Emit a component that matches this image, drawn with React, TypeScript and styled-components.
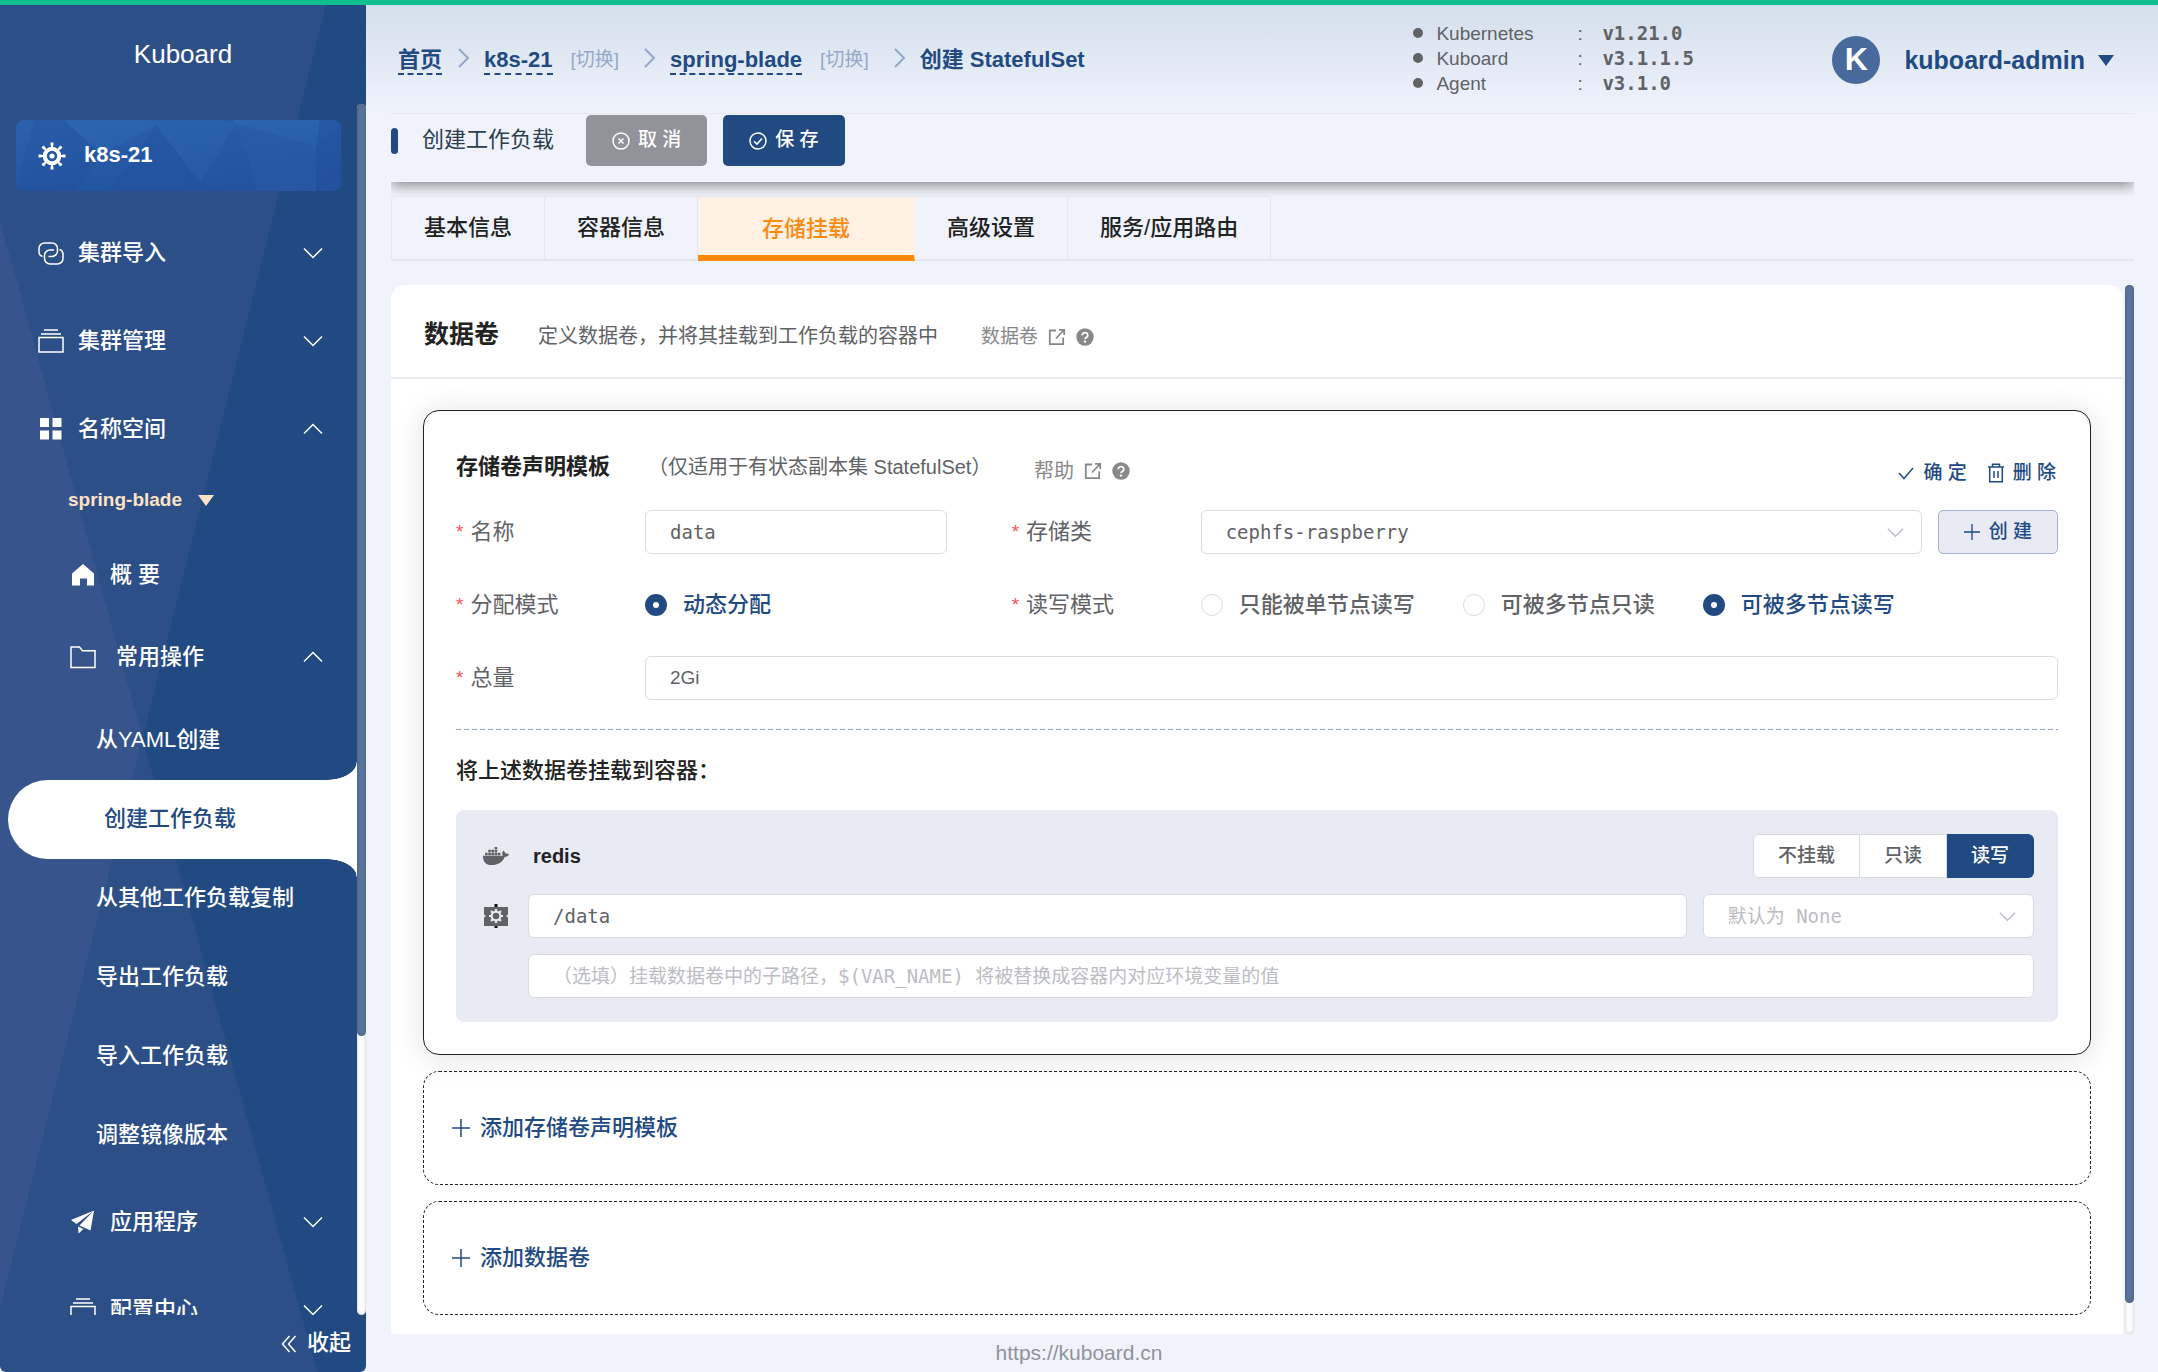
import React, { useState } from "react";
import styled, { createGlobalStyle, css } from "styled-components";
import { FaDocker } from "react-icons/fa";

const navy = "#224a82";
const sans = `"Liberation Sans", "Noto Sans CJK SC", sans-serif`;
const mono = `"DejaVu Sans Mono", "Noto Sans CJK SC", monospace`;

const GlobalStyle = createGlobalStyle`
  * { box-sizing: border-box; }
  body {
    margin: 0;
    font-family: ${sans};
    font-size: 22px;
    line-height: 1.3;
    color: #222;
    background: #f0f3fb;
  }
  button, input, select { font: inherit; color: inherit; margin: 0; }
  button { border: 0; background: none; padding: 0; cursor: pointer; }
  a { color: inherit; text-decoration: none; }
  ul, dl, dd, h1, h2, h3, p { margin: 0; padding: 0; }
  ul { list-style: none; }
  svg { display: block; flex: none; }
`;

/* ---------- icons ---------- */

const Line = styled.svg`
  fill: none;
  stroke: currentColor;
  stroke-width: 1.5;
`;

const Chevron = ({ up = false, size = 20 }: { up?: boolean; size?: number }) => (
  <Line width={size} height={size} viewBox="0 0 20 20" aria-hidden>
    <path d={up ? "M1 14.5 10 5.5l9 9" : "M1 5.5l9 9 9-9"} />
  </Line>
);

const Plus = ({ size = 18 }: { size?: number }) => (
  <Line width={size} height={size} viewBox="0 0 18 18" aria-hidden>
    <path d="M9 0v18M0 9h18" />
  </Line>
);

const WheelIcon = () => (
  <svg width="28" height="28" viewBox="0 0 28 28" aria-hidden>
    <path d="M14 1v26M1 14h26M5 5l18 18M23 5 5 23" stroke="#fff" strokeWidth="2" />
    <path
      d="M14 0.500v3M14 24.500v3M0.500 14h3M24.500 14h3M4.500 4.500l2 2M21.500 21.500l2 2M23.500 4.500l-2 2M6.500 21.500l-2 2"
      stroke="#fff"
      strokeWidth="3"
    />
    <circle cx="14" cy="14" r="9.300" fill="#fff" />
    <circle cx="14" cy="14" r="5.200" fill="#2456a0" />
    <circle cx="14" cy="14" r="2.600" fill="#fff" />
  </svg>
);

const LinkIcon = () => (
  <Line width="26" height="23" viewBox="0 0 26 23" aria-hidden>
    <path d="M4.500 14.500C2.200 13.800 1 12 1 10V6.500A5.500 5.500 0 0 1 6.500 1h7.500a5.500 5.500 0 0 1 5.500 5.500V9a5.500 5.500 0 0 1-5.500 5.500h-3.500" />
    <path d="M21.500 7.500C23.800 8.200 25 10 25 12v4.500a5.500 5.500 0 0 1-5.500 5.500H12a5.500 5.500 0 0 1-5.500-5.500V13.500a5.500 5.500 0 0 1 5.500-5.500h4" />
  </Line>
);

const StackIcon = () => (
  <Line width="26" height="26" viewBox="0 0 26 26" aria-hidden>
    <path d="M6 2h14M3 6h20M1 9.500h24v14.500H1z" />
  </Line>
);

const GridIcon = () => (
  <svg width="26" height="26" viewBox="0 0 26 26" fill="currentColor" aria-hidden>
    <path d="M2 2h9v9H2zM14.500 2h9v9h-9zM2 14.500h9v9H2zM14.500 14.500h9v9h-9z" />
  </svg>
);

const HomeIcon = () => (
  <svg width="26" height="26" viewBox="0 0 26 26" fill="currentColor" aria-hidden>
    <path d="M13 2 24 11.500V23.500H17v-7H10v7H2V11.500z" />
  </svg>
);

const FolderIcon = () => (
  <Line width="26" height="26" viewBox="0 0 26 26" aria-hidden>
    <path d="M1 23.500V3h8.500l3 3.800H25v16.700z" />
  </Line>
);

const PlaneIcon = () => (
  <svg width="26" height="26" viewBox="0 0 26 26" fill="currentColor" aria-hidden>
    <path d="M1 11 24 1.500 6.500 15zM24 1.500 20.500 21.500 9.500 16.500zM8 17.500l5.500 2.500L8.500 24.500z" />
  </svg>
);

const CircleMark = ({ kind }: { kind: "close" | "check" }) => (
  <Line width="18" height="18" viewBox="0 0 18 18" aria-hidden>
    <circle cx="9" cy="9" r="8" />
    <path d={kind === "close" ? "M6.500 6.500l5 5M11.500 6.500l-5 5" : "M5 9.200l3 2.900 5-5.600"} />
  </Line>
);

const CheckIcon = () => (
  <Line width="18" height="18" viewBox="0 0 18 18" aria-hidden>
    <path d="M2 9l5 5.500 9-10.500" />
  </Line>
);

const TrashIcon = () => (
  <Line width="18" height="20" viewBox="0 0 18 20" aria-hidden>
    <path d="M1 4h16M5.500 4V1.200h7V4M2.700 4v14.700h12.600V4M7 8v7M11 8v7" />
  </Line>
);

const ExternalIcon = () => (
  <svg width="18" height="18" viewBox="0 0 18 18" fill="none" stroke="currentColor" strokeWidth="1.800" aria-hidden>
    <path d="M8 2.500H1.800v13.700h13.400V9.500M11 1.800h5.200V7M16 2 8 10.500" />
  </svg>
);

const QuestionIcon = () => (
  <svg width="18" height="18" viewBox="0 0 18 18" aria-hidden>
    <circle cx="9" cy="9" r="8.700" fill="currentColor" />
    <path d="M6.200 7.200a2.800 2.600 0 1 1 4.400 2.100C9.500 10 9 10.300 9 11.300" fill="none" stroke="#fff" strokeWidth="1.700" />
    <circle cx="9" cy="13.600" r="1.200" fill="#fff" />
  </svg>
);

const MountIcon = () => (
  <svg width="26" height="26" viewBox="0 0 26 26" aria-hidden>
    <path d="M11.500 1h3v5h-3zM11.500 21h3v4h-3z" fill="#111" />
    <path d="M1 4h24v7.500l-2 1.500 2 1.500V23H1v-8.500L3 13 1 11.500z" fill="#606266" />
    <path
      d="M13 6v14M6 13h14M8.050 8.050l9.900 9.900M17.950 8.050l-9.900 9.900"
      stroke="#e8ebf3"
      strokeWidth="2.200"
    />
    <circle cx="13" cy="13" r="5.400" fill="#e8ebf3" />
    <circle cx="13" cy="13" r="3.300" fill="#606266" />
  </svg>
);

const DoubleLeft = () => (
  <Line width="16" height="18" viewBox="0 0 16 18" aria-hidden>
    <path d="M8.500 1 1.500 9l7 8M14.500 1l-7 8 7 8" />
  </Line>
);

const Caret = styled.span<{ $color: string }>`
  border: 8px solid transparent;
  border-top: 11px solid ${(p) => p.$color};
  border-bottom: 0;
`;

/* ---------- shell ---------- */

const Shell = styled.div`
  display: flex;
  flex-direction: column;
  height: 100vh;
  overflow: hidden;
`;

const TopStripe = styled.div`
  flex: none;
  height: 5px;
  background: #10bf8e;
`;

const Body = styled.div`
  flex: 1;
  min-height: 0;
  display: flex;
`;

/* ---------- sidebar ---------- */

const Sidebar = styled.aside`
  position: relative;
  flex: none;
  width: 366px;
  display: flex;
  flex-direction: column;
  background: ${navy};
  color: #fff;
  border-radius: 0 0 6px 6px;
  overflow: hidden;
`;

const Facets = styled.svg`
  position: absolute;
  inset: 0;
  width: 100%;
  height: 100%;
  fill: #d9aed5;
  fill-opacity: 0.06;
`;

const Brand = styled.h1`
  position: relative;
  flex: none;
  height: 99px;
  display: grid;
  place-items: center;
  font-size: 26px;
  font-weight: 400;
`;

const MenuArea = styled.div`
  position: relative;
  flex: 1;
  min-height: 0;
  display: flex;
  overflow: hidden;
`;

const Menu = styled.nav`
  flex: 1;
  padding-top: 16px;
  overflow: hidden;
`;

const ClusterLink = styled.a`
  position: relative;
  display: flex;
  align-items: center;
  gap: 18px;
  height: 71px;
  margin: 0 16px 18px;
  padding-left: 22px;
  border-radius: 8px;
  background: linear-gradient(170deg, #2b62ae, #2457a3 60%, #2452a0);
  font-weight: 700;
  overflow: hidden;
  > * { position: relative; }
`;

const ClusterFacets = styled.svg`
  && { position: absolute; }
  inset: 0;
  width: 100%;
  height: 100%;
  opacity: 0.65;
`;

const MenuItem = styled.button<{ $level?: number; $gap?: number }>`
  width: 100%;
  height: ${(p) => (p.$level ? 82 : 88)}px;
  padding: 0 34px 0 ${(p) => (p.$level ? 70 : 38)}px;
  display: flex;
  align-items: center;
  gap: ${(p) => p.$gap ?? 14}px;
  font-weight: 500;
  text-align: left;
  > span { flex: 1; }
`;

const NestedIcon = styled.i`
  padding-left: 32px;
`;

const Namespace = styled.button`
  display: flex;
  align-items: center;
  gap: 16px;
  height: 61px;
  padding: 0 0 6px 68px;
  color: #fde3c4;
  font-size: 19px;
  font-weight: 700;
`;

const SubMenu = styled.ul`
  padding: 3px 0;
`;

const SubLink = styled.a<{ $active?: boolean }>`
  position: relative;
  display: flex;
  align-items: center;
  height: 79px;
  padding-left: 96px;
  font-weight: 500;
  ${(p) =>
    p.$active &&
    css`
      margin-left: 8px;
      background: #fff;
      color: ${navy};
      border-radius: 40px 0 0 40px;
      &::before,
      &::after {
        content: "";
        position: absolute;
        right: 0;
        width: 30px;
        height: 18px;
      }
      &::before {
        bottom: 100%;
        background: radial-gradient(30px 18px at 0 0, transparent 97%, #fff);
      }
      &::after {
        top: 100%;
        background: radial-gradient(30px 18px at 0 100%, transparent 97%, #fff);
      }
    `}
`;

const CollapseButton = styled.button`
  position: relative;
  flex: none;
  height: 57px;
  display: flex;
  align-items: center;
  justify-content: flex-end;
  gap: 10px;
  padding-right: 15px;
  font-weight: 500;
`;

const ScrollTrack = styled.div`
  flex: none;
  width: 9px;
  border-radius: 5px;
  background: #fdfdfd;
  box-shadow: inset 0 0 3px rgba(0, 0, 0, 0.25);
`;

const ScrollThumb = styled.div<{ $share: number }>`
  height: ${(p) => p.$share}%;
  border-radius: 5px;
  background: #5a739c;
  box-shadow: inset 0 0 3px rgba(0, 0, 0, 0.25);
`;

/* ---------- header ---------- */

const Main = styled.main`
  flex: 1;
  min-width: 0;
  display: flex;
  flex-direction: column;
`;

const Header = styled.header`
  flex: none;
  padding: 0 24px 0 25px;
  background: linear-gradient(#d3dfec, #f0f3fc);
`;

const HeaderInner = styled.div`
  display: flex;
  align-items: center;
  height: 109px;
  padding: 0 20px 0 7px;
  border-bottom: 1px solid #e7e8ec;
`;

const Crumbs = styled.nav`
  flex: 1;
  display: flex;
  align-items: center;
  padding-top: 2px;
  color: ${navy};
  font-weight: 700;
  white-space: nowrap;
`;

const CrumbLink = styled.a`
  border: 0 dashed transparent;
  border-width: 2px 0;
  border-bottom-color: ${navy};
  line-height: 26px;
`;

const SwitchLink = styled.a`
  margin: 0 9px 0 18px;
  color: #94a8c9;
  font-size: 19px;
  font-weight: 400;
`;

const CrumbSep = styled.svg`
  margin: 0 14px 4px 16px;
  fill: none;
  stroke: #94a8c9;
  stroke-width: 2;
`;

const Versions = styled.ul`
  margin-right: 138px;
  padding-bottom: 2px;
  color: #606266;
  font-size: 19px;
  line-height: 25px;
`;

const VersionRow = styled.li`
  display: grid;
  grid-template-columns: 23px 141px 25px auto;
  align-items: center;
  &::before {
    content: "";
    width: 10px;
    height: 10px;
    border-radius: 50%;
    background: #606266;
  }
  b { font-family: ${mono}; min-width: 92px; }
`;

const UserButton = styled.button`
  display: flex;
  align-items: center;
  padding-top: 2px;
  color: ${navy};
  font-size: 25px;
  font-weight: 700;
`;

const Avatar = styled.span`
  display: grid;
  place-items: center;
  width: 48px;
  height: 48px;
  margin-right: 24px;
  border-radius: 50%;
  background: #48699b;
  color: #fff;
  font-size: 32px;
`;

const UserName = styled.span`
  margin-right: 13px;
`;

/* ---------- page ---------- */

const Page = styled.div`
  flex: 1;
  min-height: 0;
  display: flex;
  flex-direction: column;
  padding: 0 24px 0 25px;
`;

const Toolbar = styled.div`
  flex: none;
  display: flex;
  align-items: center;
  padding: 1px 0 16px;
  background: #f0f3fb;
  box-shadow: 0 4px 12px rgba(0, 0, 0, 0.42);
  clip-path: inset(0 0 -14px 0);
  &::before {
    content: "";
    width: 7px;
    height: 26px;
    margin-right: 24px;
    border-radius: 4px;
    background: ${navy};
  }
`;

const ToolbarTitle = styled.h2`
  margin-right: 32px;
  color: #2c3e50;
  font-size: 22px;
  font-weight: 400;
`;

const ActionButton = styled.button<{ $bg: string }>`
  display: flex;
  align-items: center;
  gap: 8px;
  height: 51px;
  margin-right: 16px;
  padding: 0 26px;
  border-radius: 5px;
  background: ${(p) => p.$bg};
  color: #fff;
  font-size: 19px;
  font-weight: 500;
`;

const Tabs = styled.div`
  flex: none;
  display: flex;
  margin: 14px 0 24px;
  border-bottom: 2px solid #e3e6ee;
`;

const Tab = styled.button<{ $active: boolean }>`
  height: 63px;
  padding: 0 32px;
  border: 0 solid #e3e6ee;
  border-width: 1px 1px 0 0;
  font-weight: 500;
  &:first-child {
    border-left-width: 1px;
    border-top-left-radius: 5px;
  }
  ${(p) =>
    p.$active &&
    css`
      height: 65px;
      margin-bottom: -2px;
      padding: 6px 64px 0;
      border-bottom: 6px solid #fc8a0f;
      border-right-color: #fef1e3;
      background: #fef1e3;
      color: #fc8a0f;
    `}
`;

const Scroller = styled.div`
  flex: 1;
  min-height: 0;
  display: flex;
  gap: 2px;
`;

const Card = styled.section`
  flex: 1;
  min-width: 0;
  background: #fff;
  border-radius: 14px 14px 0 0;
  overflow: hidden;
`;

const CardHeader = styled.header`
  display: flex;
  align-items: baseline;
  height: 94px;
  padding: 32px 33px 0;
  border-bottom: 2px solid #ebecf4;
`;

const CardTitle = styled.h2`
  margin-right: 39px;
  font-size: 25px;
  font-weight: 700;
`;

const Hint = styled.p<{ $width: number }>`
  min-width: ${(p) => p.$width}px;
  color: #606266;
  font-size: 20px;
  white-space: nowrap;
`;

const HelpLink = styled.a<{ $size: number }>`
  display: flex;
  align-items: center;
  gap: 10px;
  padding-top: 8px;
  color: #888;
  font-size: ${(p) => p.$size}px;
`;

const CardBody = styled.div`
  display: flex;
  flex-direction: column;
  gap: 16px;
  padding: 31px 32px 20px;
`;

const Panel = styled.section`
  padding: 33px 32px 32px;
  border: 1px solid #222;
  border-radius: 16px;
  background: #fff;
  box-shadow: 0 2px 30px rgba(0, 0, 0, 0.12);
`;

const PanelHeader = styled.header`
  display: flex;
  align-items: center;
  height: 46px;
  margin-bottom: 20px;
`;

const PanelTitle = styled.h3`
  margin-right: 38px;
  font-size: 22px;
  font-weight: 700;
`;

const PanelActions = styled.div`
  display: flex;
  gap: 20px;
  margin-left: auto;
  padding: 12px 2px 0 0;
`;

const TextButton = styled.button`
  display: flex;
  align-items: center;
  gap: 8px;
  color: ${navy};
  font-size: 19px;
  font-weight: 500;
`;

const FormRows = styled.div`
  display: flex;
  flex-direction: column;
  gap: 29px;
`;

const FormRow = styled.div`
  display: grid;
  grid-template-columns: 491fr 1047fr;
  gap: 65px;
`;

const Field = styled.div`
  display: flex;
  align-items: center;
  height: 44px;
`;

const labelStyle = css`
  flex: none;
  display: flex;
  align-items: center;
  gap: 7px;
  width: 189px;
  color: #606266;
  &::before {
    content: "*";
    color: #f5515f;
    font-size: 19px;
  }
`;
const Label = styled.label`
  ${labelStyle}
`;
const GroupLabel = styled.span`
  ${labelStyle}
`;

const boxStyle = css`
  width: 100%;
  min-width: 0;
  height: 44px;
  padding: 0 24px;
  border: 1px solid #d9dce5;
  border-radius: 6px;
  background: #fff;
  color: #606266;
  font-size: 19px;
  outline: 0;
`;

const TextInput = styled.input<{ $mono?: boolean }>`
  ${boxStyle}
  font-family: ${(p) => (p.$mono ? mono : sans)};
  &::placeholder { color: #bbbdc2; opacity: 1; }
`;

const SelectBox = styled.div`
  flex: 1;
  display: grid;
  align-items: center;
  > * { grid-area: 1 / 1; }
  > svg {
    justify-self: end;
    margin-right: 18px;
    color: #b9bcc4;
    pointer-events: none;
  }
`;

const Select = styled.select<{ $empty?: boolean }>`
  ${boxStyle}
  appearance: none;
  font-family: ${mono};
  color: ${(p) => (p.$empty ? "#bbbdc2" : "#606266")};
`;

const CreateButton = styled.button`
  flex: none;
  display: flex;
  align-items: center;
  gap: 9px;
  height: 44px;
  margin-left: 16px;
  padding: 0 25px;
  border: 1px solid #a3b3cf;
  border-radius: 5px;
  background: #e8ebf3;
  color: ${navy};
  font-size: 19px;
  font-weight: 500;
`;

const RadioLabel = styled.label<{ $on: boolean }>`
  display: flex;
  align-items: center;
  gap: 16px;
  margin-right: 48px;
  color: ${(p) => (p.$on ? navy : "#606266")};
  font-weight: 500;
  white-space: nowrap;
`;

const Radio = styled.input`
  appearance: none;
  width: 22px;
  height: 22px;
  border: 1px solid #d9dce5;
  border-radius: 50%;
  background: #fff;
  &:checked { border: 8px solid ${navy}; }
`;

const Divider = styled.hr`
  height: 1px;
  margin: 29px 0 26px;
  border: 0;
  background: repeating-linear-gradient(90deg, #8ea3c5 0 5px, transparent 5px 8px);
`;

const MountTitle = styled.h3`
  margin-bottom: 24px;
  font-size: 22px;
  font-weight: 500;
  line-height: 30px;
`;

const MountBox = styled.div`
  display: grid;
  grid-template-columns: 48px minmax(0, 1fr);
  gap: 16px 0;
  padding: 24px;
  border-radius: 8px;
  background: #e8ebf3;
`;

const MountIconCell = styled.div`
  display: grid;
  place-content: center start;
  padding-left: 3px;
  color: #606266;
`;

const MountRow = styled.div`
  grid-column: 2;
  display: flex;
  gap: 16px;
  height: 44px;
`;

const ContainerName = styled.strong`
  flex: 1;
  align-self: center;
  padding-left: 5px;
  font-size: 20px;
`;

const SelectSlot = styled.div`
  flex: none;
  display: flex;
  width: 22%;
`;

const Segments = styled.div`
  display: flex;
`;

const Segment = styled.button<{ $on: boolean }>`
  padding: 0 24px;
  border: 1px solid ${(p) => (p.$on ? navy : "#d9dce5")};
  background: ${(p) => (p.$on ? navy : "#fff")};
  color: ${(p) => (p.$on ? "#fff" : "#606266")};
  font-size: 19px;
  font-weight: 500;
  & + & { border-left-width: 0; }
  &:first-child { border-radius: 6px 0 0 6px; }
  &:last-child { border-radius: 0 6px 6px 0; }
`;

const AddButton = styled.button`
  display: flex;
  align-items: center;
  gap: 10px;
  height: 114px;
  padding: 0 28px;
  border: 1px dashed #222;
  border-radius: 16px;
  color: ${navy};
  font-weight: 500;
`;

const Footer = styled.footer`
  flex: none;
  height: 38px;
  padding-right: 366px;
  color: #909399;
  font-size: 21px;
  line-height: 38px;
  text-align: center;
`;

const tabs = ["基本信息", "容器信息", "存储挂载", "高级设置", "服务/应用路由"];
const subLinks = ["从YAML创建", "创建工作负载", "从其他工作负载复制", "导出工作负载", "导入工作负载", "调整镜像版本"];
const versions = [
  ["Kubernetes", "v1.21.0"],
  ["Kuboard", "v3.1.1.5"],
  ["Agent", "v3.1.0"],
];
const accessModes = ["只能被单节点读写", "可被多节点只读", "可被多节点读写"];
const mountModes = ["不挂载", "只读", "读写"];

const Separator = () => (
  <CrumbSep width="12" height="20" viewBox="0 0 12 20" aria-hidden>
    <path d="M1 1l9 9-9 9" />
  </CrumbSep>
);

function SideMenu() {
  return (
    <Sidebar>
      <Facets viewBox="0 0 366 1367" preserveAspectRatio="none" aria-hidden>
        <path d="M0 0H326L0 1303z" />
        <path d="M0 215 317 1367H0z" />
      </Facets>
      <Brand>Kuboard</Brand>
      <MenuArea>
        <Menu>
          <ClusterLink href="#cluster">
            <ClusterFacets viewBox="0 0 325 71" preserveAspectRatio="none" aria-hidden>
              <path d="M48 0 86 35 140 5 138 0z" fill="#3a7bc0" opacity=".3" />
              <path d="M0 71 18 0H48L86 35 60 71z" fill="#1e4a96" opacity=".3" />
              <path d="M140 5 184 63 220 4 205 0H138z" fill="#3a80c4" opacity=".22" />
              <path d="M92 71 140 5 184 63 205 71z" fill="#1e4c9a" opacity=".28" />
              <path d="M220 4 300 26 304 0H216z" fill="#3f8cc4" opacity=".3" />
              <path d="M220 4 300 26V71H242z" fill="#3468b8" opacity=".25" />
              <path d="M300 26 325 4V60L300 71z" fill="#1f4c9c" opacity=".25" />
            </ClusterFacets>
            <WheelIcon />
            <span>k8s-21</span>
          </ClusterLink>
          <MenuItem>
            <LinkIcon />
            <span>集群导入</span>
            <Chevron />
          </MenuItem>
          <MenuItem>
            <StackIcon />
            <span>集群管理</span>
            <Chevron />
          </MenuItem>
          <MenuItem>
            <GridIcon />
            <span>名称空间</span>
            <Chevron up />
          </MenuItem>
          <Namespace>
            spring-blade
            <Caret $color="#fde3c4" />
          </Namespace>
          <MenuItem $level={1}>
            <HomeIcon />
            <span>概 要</span>
          </MenuItem>
          <MenuItem $level={1} $gap={20}>
            <FolderIcon />
            <span>常用操作</span>
            <Chevron up />
          </MenuItem>
          <SubMenu>
            {subLinks.map((text) => (
              <li key={text}>
                <SubLink href="#menu" $active={text === "创建工作负载"}>
                  {text}
                </SubLink>
              </li>
            ))}
          </SubMenu>
          <MenuItem>
            <NestedIcon>
              <PlaneIcon />
            </NestedIcon>
            <span>应用程序</span>
            <Chevron />
          </MenuItem>
          <MenuItem>
            <NestedIcon>
              <StackIcon />
            </NestedIcon>
            <span>配置中心</span>
            <Chevron />
          </MenuItem>
        </Menu>
        <ScrollTrack>
          <ScrollThumb $share={77} />
        </ScrollTrack>
      </MenuArea>
      <CollapseButton>
        <DoubleLeft />
        收起
      </CollapseButton>
    </Sidebar>
  );
}

export default function App() {
  const [tab, setTab] = useState("存储挂载");
  const [access, setAccess] = useState("可被多节点读写");
  const [mount, setMount] = useState("读写");

  return (
    <Shell>
      <GlobalStyle />
      <TopStripe />
      <Body>
        <SideMenu />
        <Main>
          <Header>
            <HeaderInner>
              <Crumbs aria-label="breadcrumb">
                <CrumbLink href="#home">首页</CrumbLink>
                <Separator />
                <CrumbLink href="#cluster">k8s-21</CrumbLink>
                <SwitchLink href="#switch">[切换]</SwitchLink>
                <Separator />
                <CrumbLink href="#namespace">spring-blade</CrumbLink>
                <SwitchLink href="#switch">[切换]</SwitchLink>
                <Separator />
                <span>创建 StatefulSet</span>
              </Crumbs>
              <Versions>
                {versions.map(([name, value]) => (
                  <VersionRow key={name}>
                    <span>{name}</span>
                    <span>:</span>
                    <b>{value}</b>
                  </VersionRow>
                ))}
              </Versions>
              <UserButton>
                <Avatar>K</Avatar>
                <UserName>kuboard-admin</UserName>
                <Caret $color={navy} />
              </UserButton>
            </HeaderInner>
          </Header>
          <Page>
            <Toolbar>
              <ToolbarTitle>创建工作负载</ToolbarTitle>
              <ActionButton $bg="#909399">
                <CircleMark kind="close" />取 消
              </ActionButton>
              <ActionButton $bg={navy}>
                <CircleMark kind="check" />保 存
              </ActionButton>
            </Toolbar>
            <Tabs role="tablist">
              {tabs.map((t) => (
                <Tab key={t} role="tab" aria-selected={t === tab} $active={t === tab} onClick={() => setTab(t)}>
                  {t}
                </Tab>
              ))}
            </Tabs>
            <Scroller>
              <Card>
                <CardHeader>
                  <CardTitle>数据卷</CardTitle>
                  <Hint $width={443}>定义数据卷，并将其挂载到工作负载的容器中</Hint>
                  <HelpLink href="#help" $size={19}>
                    数据卷
                    <ExternalIcon />
                    <QuestionIcon />
                  </HelpLink>
                </CardHeader>
                <CardBody>
                  <Panel>
                    <PanelHeader>
                      <PanelTitle>存储卷声明模板</PanelTitle>
                      <Hint $width={386}>（仅适用于有状态副本集 StatefulSet）</Hint>
                      <HelpLink href="#help" $size={20}>
                        帮助
                        <ExternalIcon />
                        <QuestionIcon />
                      </HelpLink>
                      <PanelActions>
                        <TextButton>
                          <CheckIcon />确 定
                        </TextButton>
                        <TextButton>
                          <TrashIcon />删 除
                        </TextButton>
                      </PanelActions>
                    </PanelHeader>
                    <FormRows>
                      <FormRow>
                        <Field>
                          <Label htmlFor="name">名称</Label>
                          <TextInput id="name" $mono defaultValue="data" />
                        </Field>
                        <Field>
                          <Label htmlFor="storage-class">存储类</Label>
                          <SelectBox>
                            <Select id="storage-class" defaultValue="cephfs-raspberry">
                              <option>cephfs-raspberry</option>
                            </Select>
                            <Chevron size={17} />
                          </SelectBox>
                          <CreateButton>
                            <Plus size={16} />创 建
                          </CreateButton>
                        </Field>
                      </FormRow>
                      <FormRow>
                        <Field role="radiogroup" aria-labelledby="alloc">
                          <GroupLabel id="alloc">分配模式</GroupLabel>
                          <RadioLabel $on>
                            <Radio type="radio" name="alloc" defaultChecked />
                            动态分配
                          </RadioLabel>
                        </Field>
                        <Field role="radiogroup" aria-labelledby="access">
                          <GroupLabel id="access">读写模式</GroupLabel>
                          {accessModes.map((m) => (
                            <RadioLabel key={m} $on={m === access}>
                              <Radio type="radio" name="access" checked={m === access} onChange={() => setAccess(m)} />
                              {m}
                            </RadioLabel>
                          ))}
                        </Field>
                      </FormRow>
                      <Field>
                        <Label htmlFor="total">总量</Label>
                        <TextInput id="total" defaultValue="2Gi" />
                      </Field>
                    </FormRows>
                    <Divider />
                    <MountTitle>将上述数据卷挂载到容器：</MountTitle>
                    <MountBox>
                      <MountIconCell>
                        <FaDocker size={26} />
                      </MountIconCell>
                      <MountRow>
                        <ContainerName>redis</ContainerName>
                        <Segments>
                          {mountModes.map((m) => (
                            <Segment key={m} $on={m === mount} aria-pressed={m === mount} onClick={() => setMount(m)}>
                              {m}
                            </Segment>
                          ))}
                        </Segments>
                      </MountRow>
                      <MountIconCell>
                        <MountIcon />
                      </MountIconCell>
                      <MountRow>
                        <TextInput $mono defaultValue="/data" aria-label="挂载路径" />
                        <SelectSlot>
                          <SelectBox>
                            <Select $empty defaultValue="" aria-label="传播方式">
                              <option value="">默认为 None</option>
                            </Select>
                            <Chevron size={17} />
                          </SelectBox>
                        </SelectSlot>
                      </MountRow>
                      <MountRow>
                        <TextInput
                          $mono
                          placeholder="（选填）挂载数据卷中的子路径，$(VAR_NAME) 将被替换成容器内对应环境变量的值"
                          aria-label="子路径"
                        />
                      </MountRow>
                    </MountBox>
                  </Panel>
                  <AddButton>
                    <Plus />
                    添加存储卷声明模板
                  </AddButton>
                  <AddButton>
                    <Plus />
                    添加数据卷
                  </AddButton>
                </CardBody>
              </Card>
              <ScrollTrack>
                <ScrollThumb $share={97} />
              </ScrollTrack>
            </Scroller>
          </Page>
          <Footer>
            <a href="#kuboard">https://kuboard.cn</a>
          </Footer>
        </Main>
      </Body>
    </Shell>
  );
}
